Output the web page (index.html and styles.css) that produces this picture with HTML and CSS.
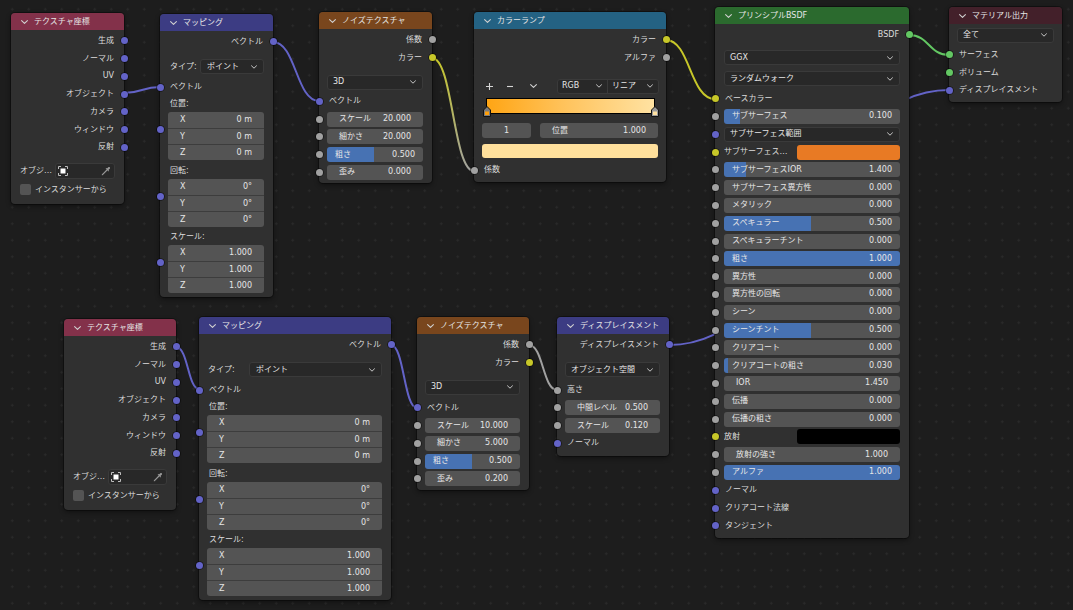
FILE: index.html
```html
<!DOCTYPE html>
<html lang="ja">
<head>
<meta charset="utf-8">
<title>Shader Editor</title>
<link rel="stylesheet" href="styles.css">
</head>
<body>
<div class="canvas">
  <svg class="links" width="1073" height="610" viewBox="0 0 1073 610">
    <defs>
      <linearGradient id="gYG" gradientUnits="userSpaceOnUse" x1="432" y1="58" x2="474" y2="171">
        <stop offset="0" stop-color="#c7c729"/>
        <stop offset="1" stop-color="#a1a1a1"/>
      </linearGradient>
    </defs>
    <g fill="none" stroke-width="2" stroke-linecap="round">
      <path d="M124 93 C142 93 142 87 160 87" stroke="#6363c7"/>
      <path d="M273 42 C296 42 296 101 319 101" stroke="#6363c7"/>
      <path d="M432 58 C453 58 453 171 474 171" stroke="url(#gYG)"/>
      <path d="M666 40 C690 40 690 99 715 99" stroke="#c7c729"/>
      <path d="M909 35 C929 35 929 55 949 55" stroke="#63c763"/>
      <path d="M669 345 C809 345 809 90 949 90" stroke="#6363c7"/>
      <path d="M176 347 C188 347 188 389 199 389" stroke="#6363c7"/>
      <path d="M391 345 C404 345 404 408 417 408" stroke="#6363c7"/>
      <path d="M529 345 C543 345 543 390 557 390" stroke="#a1a1a1"/>
    </g>
  </svg>

  <!-- Texture Coordinate 1 -->
  <div class="node n-tc1">
    <div class="hdr h-input"><svg class="chev" viewBox="0 0 7 4"><path d="M0.6 0.6 L3.5 3.4 L6.4 0.6"/></svg><span>テクスチャ座標</span></div>
    <div class="body pb4">
      <div class="row out">生成<i class="sk r vec"></i></div>
      <div class="row out">ノーマル<i class="sk r vec"></i></div>
      <div class="row out">UV<i class="sk r vec"></i></div>
      <div class="row out">オブジェクト<i class="sk r vec"></i></div>
      <div class="row out">カメラ<i class="sk r vec"></i></div>
      <div class="row out">ウィンドウ<i class="sk r vec"></i></div>
      <div class="row out">反射<i class="sk r vec"></i></div>
      <div class="row objrow mt55"><span class="objl">オブジ…</span>
        <div class="objf">
          <svg class="objico" viewBox="0 0 10 10"><path d="M0.5 3 V0.5 H3 M7 0.5 H9.5 V3 M9.5 7 V9.5 H7 M3 9.5 H0.5 V7" fill="none" stroke="#bdbdbd" stroke-width="1"/><rect x="2.5" y="2.5" width="5" height="5" fill="#ffffff"/></svg>
          <svg class="pick" viewBox="0 0 10 10"><path d="M0.8 9.2 L1.6 9.2 L6.4 4.4 L5.6 3.6 L0.8 8.4 Z" fill="#9a9a9a"/><path d="M4.6 2.6 L7.4 5.4 L8.1 4.7 L7.4 4 L9 2.4 A1.2 1.2 0 0 0 7.6 1 L6 2.6 L5.3 1.9 Z" fill="#9a9a9a"/></svg>
        </div>
      </div>
      <div class="row chkrow"><i class="cb"></i><span>インスタンサーから</span></div>
    </div>
  </div>

  <!-- Mapping 1 -->
  <div class="node n-map1">
    <div class="hdr h-vec"><svg class="chev" viewBox="0 0 7 4"><path d="M0.6 0.6 L3.5 3.4 L6.4 0.6"/></svg><span>マッピング</span></div>
    <div class="body pb4">
      <div class="row out">ベクトル<i class="sk r vec"></i></div>
      <div class="row w dr mt55 tp tp1"><span class="tpl">タイプ:</span><div class="dd"><span>ポイント</span><svg viewBox="0 0 7 4"><path d="M0.6 0.6 L3.5 3.4 L6.4 0.6"/></svg></div></div>
      <div class="row in mt1">ベクトル<i class="sk l vec"></i></div>
      <div class="vb"><i class="sk l vec"></i><div class="vl">位置:</div>
        <div class="vg"><div class="vf"><span>X</span><span>0 m</span></div><div class="vf"><span>Y</span><span>0 m</span></div><div class="vf"><span>Z</span><span>0 m</span></div></div></div>
      <div class="vb mt3"><i class="sk l vec"></i><div class="vl">回転:</div>
        <div class="vg"><div class="vf"><span>X</span><span>0°</span></div><div class="vf"><span>Y</span><span>0°</span></div><div class="vf"><span>Z</span><span>0°</span></div></div></div>
      <div class="vb mt2"><i class="sk l vec"></i><div class="vl">スケール:</div>
        <div class="vg"><div class="vf"><span>X</span><span>1.000</span></div><div class="vf"><span>Y</span><span>1.000</span></div><div class="vf"><span>Z</span><span>1.000</span></div></div></div>
    </div>
  </div>

  <!-- Noise 1 -->
  <div class="node n-noise1">
    <div class="hdr h-tex"><svg class="chev" viewBox="0 0 7 4"><path d="M0.6 0.6 L3.5 3.4 L6.4 0.6"/></svg><span>ノイズテクスチャ</span></div>
    <div class="body pb2">
      <div class="row out">係数<i class="sk r flt"></i></div>
      <div class="row out">カラー<i class="sk r col"></i></div>
      <div class="row w dr mt5"><div class="dd"><span>3D</span><svg viewBox="0 0 7 4"><path d="M0.6 0.6 L3.5 3.4 L6.4 0.6"/></svg></div></div>
      <div class="row in">ベクトル<i class="sk l vec"></i></div>
      <div class="row w"><i class="sk l flt"></i><div class="num"><span>スケール</span><span>20.000</span></div></div>
      <div class="row w"><i class="sk l flt"></i><div class="num"><span>細かさ</span><span>20.000</span></div></div>
      <div class="row w"><i class="sk l flt"></i><div class="num sl" style="--v:49%"><span>粗さ</span><span>0.500</span></div></div>
      <div class="row w"><i class="sk l flt"></i><div class="num"><span>歪み</span><span>0.000</span></div></div>
    </div>
  </div>

  <!-- Color Ramp -->
  <div class="node n-ramp">
    <div class="hdr h-conv"><svg class="chev" viewBox="0 0 7 4"><path d="M0.6 0.6 L3.5 3.4 L6.4 0.6"/></svg><span>カラーランプ</span></div>
    <div class="body">
      <div class="row out">カラー<i class="sk r col"></i></div>
      <div class="row out">アルファ<i class="sk r flt"></i></div>
      <div class="rtool">
        <svg class="tplus" viewBox="0 0 7 7"><path d="M3.5 0 V7 M0 3.5 H7" stroke="#d6d6d6" stroke-width="1.1"/></svg>
        <svg class="tminus" viewBox="0 0 6 7"><path d="M0 3.5 H6" stroke="#d6d6d6" stroke-width="1.1"/></svg>
        <svg class="tchev" viewBox="0 0 7 4"><path d="M0.6 0.6 L3.5 3.4 L6.4 0.6"/></svg>
        <div class="seg">
          <div class="segi s1"><span>RGB</span><svg viewBox="0 0 7 4"><path d="M0.6 0.6 L3.5 3.4 L6.4 0.6"/></svg></div>
          <div class="segi s2"><span>リニア</span><svg viewBox="0 0 7 4"><path d="M0.6 0.6 L3.5 3.4 L6.4 0.6"/></svg></div>
        </div>
      </div>
      <div class="rbar">
        <svg class="stop st-l" viewBox="0 0 8 11"><path d="M0.5 4 L4 0.5 L7.5 4 V10.5 H0.5 Z" fill="#7c7c7c" stroke="#111" stroke-width="1"/><rect x="2" y="5.5" width="4" height="3.5" fill="#ff9f0a"/></svg>
        <svg class="stop st-r" viewBox="0 0 8 11"><path d="M0.5 4 L4 0.5 L7.5 4 V10.5 H0.5 Z" fill="#9a9a9a" stroke="#111" stroke-width="1"/><rect x="2" y="5.5" width="4" height="3.5" fill="#ffe2a2"/></svg>
      </div>
      <div class="rf">
        <div class="num ctr"><span>1</span></div>
        <div class="num"><span>位置</span><span>1.000</span></div>
      </div>
      <div class="rsw"></div>
      <div class="row in mt325">係数<i class="sk l flt"></i></div>
    </div>
  </div>

  <!-- Principled BSDF -->
  <div class="node n-bsdf">
    <div class="hdr h-shd"><svg class="chev" viewBox="0 0 7 4"><path d="M0.6 0.6 L3.5 3.4 L6.4 0.6"/></svg><span>プリンシプルBSDF</span></div>
    <div class="body">
      <div class="row out">BSDF<i class="sk r shd"></i></div>
      <div class="row w dr mt35"><div class="dd"><span>GGX</span><svg viewBox="0 0 7 4"><path d="M0.6 0.6 L3.5 3.4 L6.4 0.6"/></svg></div></div>
      <div class="row w dr"><div class="dd"><span>ランダムウォーク</span><svg viewBox="0 0 7 4"><path d="M0.6 0.6 L3.5 3.4 L6.4 0.6"/></svg></div></div>
      <div class="row in mt05">ベースカラー<i class="sk l col"></i></div>
      <div class="row w"><i class="sk l flt"></i><div class="num sl" style="--v:9%"><span>サブサーフェス</span><span>0.100</span></div></div>
      <div class="row w"><i class="sk l vec"></i><div class="dd"><span>サブサーフェス範囲</span><svg viewBox="0 0 7 4"><path d="M0.6 0.6 L3.5 3.4 L6.4 0.6"/></svg></div></div>
      <div class="row w"><i class="sk l col"></i><span class="cl">サブサーフェス…</span><div class="sw sw-or"></div></div>
      <div class="row w"><i class="sk l flt"></i><div class="num sl" style="--v:12.5%"><span>サブサーフェスIOR</span><span>1.400</span></div></div>
      <div class="row w"><i class="sk l flt"></i><div class="num sl" style="--v:0%"><span>サブサーフェス異方性</span><span>0.000</span></div></div>
      <div class="row w"><i class="sk l flt"></i><div class="num sl" style="--v:0%"><span>メタリック</span><span>0.000</span></div></div>
      <div class="row w"><i class="sk l flt"></i><div class="num sl" style="--v:49.5%"><span>スペキュラー</span><span>0.500</span></div></div>
      <div class="row w"><i class="sk l flt"></i><div class="num sl" style="--v:0%"><span>スペキュラーチント</span><span>0.000</span></div></div>
      <div class="row w"><i class="sk l flt"></i><div class="num sl" style="--v:100%"><span>粗さ</span><span>1.000</span></div></div>
      <div class="row w"><i class="sk l flt"></i><div class="num sl" style="--v:0%"><span>異方性</span><span>0.000</span></div></div>
      <div class="row w"><i class="sk l flt"></i><div class="num sl" style="--v:0%"><span>異方性の回転</span><span>0.000</span></div></div>
      <div class="row w"><i class="sk l flt"></i><div class="num sl" style="--v:0%"><span>シーン</span><span>0.000</span></div></div>
      <div class="row w"><i class="sk l flt"></i><div class="num sl" style="--v:49.5%"><span>シーンチント</span><span>0.500</span></div></div>
      <div class="row w"><i class="sk l flt"></i><div class="num sl" style="--v:0%"><span>クリアコート</span><span>0.000</span></div></div>
      <div class="row w"><i class="sk l flt"></i><div class="num sl" style="--v:2%"><span>クリアコートの粗さ</span><span>0.030</span></div></div>
      <div class="row w"><i class="sk l flt"></i><div class="num"><span>IOR</span><span>1.450</span></div></div>
      <div class="row w"><i class="sk l flt"></i><div class="num sl" style="--v:0%"><span>伝播</span><span>0.000</span></div></div>
      <div class="row w"><i class="sk l flt"></i><div class="num sl" style="--v:0%"><span>伝播の粗さ</span><span>0.000</span></div></div>
      <div class="row w"><i class="sk l col"></i><span class="cl">放射</span><div class="sw sw-bk"></div></div>
      <div class="row w"><i class="sk l flt"></i><div class="num"><span>放射の強さ</span><span>1.000</span></div></div>
      <div class="row w"><i class="sk l flt"></i><div class="num sl" style="--v:100%"><span>アルファ</span><span>1.000</span></div></div>
      <div class="row in">ノーマル<i class="sk l vec"></i></div>
      <div class="row in">クリアコート法線<i class="sk l vec"></i></div>
      <div class="row in">タンジェント<i class="sk l vec"></i></div>
    </div>
  </div>

  <!-- Material Output -->
  <div class="node n-out">
    <div class="hdr h-out"><svg class="chev" viewBox="0 0 7 4"><path d="M0.6 0.6 L3.5 3.4 L6.4 0.6"/></svg><span>マテリアル出力</span></div>
    <div class="body">
      <div class="row w r18"><div class="dd"><span>全て</span><svg viewBox="0 0 7 4"><path d="M0.6 0.6 L3.5 3.4 L6.4 0.6"/></svg></div></div>
      <div class="row in mt2">サーフェス<i class="sk l shd"></i></div>
      <div class="row in">ボリューム<i class="sk l shd"></i></div>
      <div class="row in">ディスプレイスメント<i class="sk l vec"></i></div>
    </div>
  </div>

  <!-- Texture Coordinate 2 -->
  <div class="node n-tc2">
    <div class="hdr h-input"><svg class="chev" viewBox="0 0 7 4"><path d="M0.6 0.6 L3.5 3.4 L6.4 0.6"/></svg><span>テクスチャ座標</span></div>
    <div class="body pb4">
      <div class="row out">生成<i class="sk r vec"></i></div>
      <div class="row out">ノーマル<i class="sk r vec"></i></div>
      <div class="row out">UV<i class="sk r vec"></i></div>
      <div class="row out">オブジェクト<i class="sk r vec"></i></div>
      <div class="row out">カメラ<i class="sk r vec"></i></div>
      <div class="row out">ウィンドウ<i class="sk r vec"></i></div>
      <div class="row out">反射<i class="sk r vec"></i></div>
      <div class="row objrow mt55"><span class="objl">オブジ…</span>
        <div class="objf">
          <svg class="objico" viewBox="0 0 10 10"><path d="M0.5 3 V0.5 H3 M7 0.5 H9.5 V3 M9.5 7 V9.5 H7 M3 9.5 H0.5 V7" fill="none" stroke="#bdbdbd" stroke-width="1"/><rect x="2.5" y="2.5" width="5" height="5" fill="#ffffff"/></svg>
          <svg class="pick" viewBox="0 0 10 10"><path d="M0.8 9.2 L1.6 9.2 L6.4 4.4 L5.6 3.6 L0.8 8.4 Z" fill="#9a9a9a"/><path d="M4.6 2.6 L7.4 5.4 L8.1 4.7 L7.4 4 L9 2.4 A1.2 1.2 0 0 0 7.6 1 L6 2.6 L5.3 1.9 Z" fill="#9a9a9a"/></svg>
        </div>
      </div>
      <div class="row chkrow"><i class="cb"></i><span>インスタンサーから</span></div>
    </div>
  </div>

  <!-- Mapping 2 -->
  <div class="node n-map2">
    <div class="hdr h-vec"><svg class="chev" viewBox="0 0 7 4"><path d="M0.6 0.6 L3.5 3.4 L6.4 0.6"/></svg><span>マッピング</span></div>
    <div class="body pb4">
      <div class="row out">ベクトル<i class="sk r vec"></i></div>
      <div class="row w dr mt55 tp tp2"><span class="tpl">タイプ:</span><div class="dd"><span>ポイント</span><svg viewBox="0 0 7 4"><path d="M0.6 0.6 L3.5 3.4 L6.4 0.6"/></svg></div></div>
      <div class="row in mt1">ベクトル<i class="sk l vec"></i></div>
      <div class="vb"><i class="sk l vec"></i><div class="vl">位置:</div>
        <div class="vg"><div class="vf"><span>X</span><span>0 m</span></div><div class="vf"><span>Y</span><span>0 m</span></div><div class="vf"><span>Z</span><span>0 m</span></div></div></div>
      <div class="vb mt3"><i class="sk l vec"></i><div class="vl">回転:</div>
        <div class="vg"><div class="vf"><span>X</span><span>0°</span></div><div class="vf"><span>Y</span><span>0°</span></div><div class="vf"><span>Z</span><span>0°</span></div></div></div>
      <div class="vb mt2"><i class="sk l vec"></i><div class="vl">スケール:</div>
        <div class="vg"><div class="vf"><span>X</span><span>1.000</span></div><div class="vf"><span>Y</span><span>1.000</span></div><div class="vf"><span>Z</span><span>1.000</span></div></div></div>
    </div>
  </div>

  <!-- Noise 2 -->
  <div class="node n-noise2">
    <div class="hdr h-tex"><svg class="chev" viewBox="0 0 7 4"><path d="M0.6 0.6 L3.5 3.4 L6.4 0.6"/></svg><span>ノイズテクスチャ</span></div>
    <div class="body pb2">
      <div class="row out">係数<i class="sk r flt"></i></div>
      <div class="row out">カラー<i class="sk r col"></i></div>
      <div class="row w dr mt5"><div class="dd"><span>3D</span><svg viewBox="0 0 7 4"><path d="M0.6 0.6 L3.5 3.4 L6.4 0.6"/></svg></div></div>
      <div class="row in mt15">ベクトル<i class="sk l vec"></i></div>
      <div class="row w"><i class="sk l flt"></i><div class="num"><span>スケール</span><span>10.000</span></div></div>
      <div class="row w"><i class="sk l flt"></i><div class="num"><span>細かさ</span><span>5.000</span></div></div>
      <div class="row w"><i class="sk l flt"></i><div class="num sl" style="--v:49%"><span>粗さ</span><span>0.500</span></div></div>
      <div class="row w"><i class="sk l flt"></i><div class="num"><span>歪み</span><span>0.200</span></div></div>
    </div>
  </div>

  <!-- Displacement -->
  <div class="node n-disp">
    <div class="hdr h-vec"><svg class="chev" viewBox="0 0 7 4"><path d="M0.6 0.6 L3.5 3.4 L6.4 0.6"/></svg><span>ディスプレイスメント</span></div>
    <div class="body pb4">
      <div class="row out">ディスプレイスメント<i class="sk r vec"></i></div>
      <div class="row w dr mt55"><div class="dd"><span>オブジェクト空間</span><svg viewBox="0 0 7 4"><path d="M0.6 0.6 L3.5 3.4 L6.4 0.6"/></svg></div></div>
      <div class="row in mt1">高さ<i class="sk l flt"></i></div>
      <div class="row w"><i class="sk l flt"></i><div class="num"><span>中間レベル</span><span>0.500</span></div></div>
      <div class="row w"><i class="sk l flt"></i><div class="num"><span>スケール</span><span>0.120</span></div></div>
      <div class="row in">ノーマル<i class="sk l vec"></i></div>
    </div>
  </div>
</div>
</body>
</html>
```
FILE: styles.css
```css
* { box-sizing: border-box; }
html, body { margin: 0; padding: 0; }
body {
  width: 1073px;
  height: 610px;
  overflow: hidden;
  background: #1d1d1d;
  font-family: "DejaVu Sans", "Noto Sans CJK JP", sans-serif;
  font-size: 8px;
  line-height: 10px;
  color: #dcdcdc;
}
.canvas {
  position: relative;
  width: 1073px;
  height: 610px;
  background-color: #1d1d1d;
  background-image: radial-gradient(circle at center, #2a2a2a 0 1px, transparent 1.3px);
  background-size: 16.5px 16.5px;
  background-position: 4px 1px;
}
.links { position: absolute; left: 0; top: 0; }

/* nodes on the free canvas */
.node {
  position: absolute;
  background: #303030;
  border-radius: 4px;
  box-shadow: 0 0 0 1px rgba(0,0,0,0.35), 0 2px 5px rgba(0,0,0,0.45);
  display: flex;
  flex-direction: column;
}
.n-tc1 { left: 11px; top: 13px; width: 113px; }
.n-map1 { left: 160px; top: 14px; width: 113px; }
.n-noise1 { left: 319px; top: 12px; width: 113px; }
.n-ramp { left: 474px; top: 12px; width: 192px; }
.n-bsdf { left: 715px; top: 7px; width: 194px; }
.n-out { left: 949px; top: 7px; width: 113px; }
.n-tc2 { left: 64px; top: 319px; width: 112px; }
.n-map2 { left: 199px; top: 317px; width: 192px; }
.n-noise2 { left: 417px; top: 317px; width: 112px; }
.n-disp { left: 557px; top: 317px; width: 112px; }

.hdr {
  height: 17px;
  flex: none;
  display: flex;
  align-items: center;
  gap: 6px;
  padding-left: 10px;
  border-radius: 4px 4px 0 0;
  color: #e6e6e6;
  white-space: nowrap;
}
.hdr .chev { width: 7px; height: 4px; flex: none; }
.chev path, .dd svg path, .segi svg path, .tchev path {
  fill: none; stroke: #d0d0d0; stroke-width: 1.1; stroke-linecap: round; stroke-linejoin: round;
}
.h-input { background: #83314a; }
.h-vec { background: #3c3c83; }
.h-tex { background: #79461d; }
.h-conv { background: #246283; }
.h-shd { background: #2b6a2e; }
.h-out { background: #43202a; }

.body { display: flex; flex-direction: column; padding: 2px 0 3px; }
.pb2 { padding-bottom: 2px; }
.pb4 { padding-bottom: 4px; }

.row {
  position: relative;
  flex: none;
  height: 17.75px;
  display: flex;
  align-items: center;
  padding: 0 10px;
  white-space: nowrap;
}
.n-bsdf .row { height: 17.8px; }
.row.out { justify-content: flex-end; }
.row.w { padding: 0 9px 0 8px; }
.n-bsdf .row.w { padding: 0 9px; }
.n-ramp .row.w, .n-out .row.w { padding: 0 8px; }
.row.dr, .n-bsdf .row.dr { height: 21px; }
.row.r18 { height: 18px; }

.mt05 { margin-top: 0.5px; }
.mt1 { margin-top: 1px; }
.mt15 { margin-top: 1.5px; }
.mt2 { margin-top: 2px; }
.mt3 { margin-top: 3px; }
.mt325 { margin-top: 3.25px; }
.mt35 { margin-top: 3.5px; }
.mt5 { margin-top: 5px; }
.mt55 { margin-top: 5.5px; }

/* sockets */
.sk {
  position: absolute;
  top: 50%;
  width: 7px;
  height: 7px;
  margin-top: -3.5px;
  border-radius: 50%;
  box-shadow: 0 0 0 0.8px rgba(0,0,0,0.55);
}
.sk.r { right: -3.5px; }
.sk.l { left: -3.5px; }
.vec { background: #6363c7; }
.flt { background: #a1a1a1; }
.col { background: #c7c729; }
.shd { background: #63c763; }

/* number field / slider */
.num {
  flex: 1;
  height: 15px;
  border-radius: 3px;
  background: #545454;
  display: flex;
  align-items: center;
  justify-content: space-between;
  padding: 0 12px;
  color: #e6e6e6;
  overflow: hidden;
}
.num.sl {
  padding: 0 8px;
  background: linear-gradient(90deg, #4772b3 var(--v, 0%), #545454 var(--v, 0%));
}
.num.ctr { justify-content: center; flex: none; width: 49px; }

/* dropdown */
.dd {
  flex: 1;
  height: 15px;
  border-radius: 3px;
  background: #282828;
  border: 1px solid #3a3a3a;
  display: flex;
  align-items: center;
  justify-content: space-between;
  padding: 0 6px 0 5px;
  color: #e6e6e6;
  overflow: hidden;
}
.dd svg { width: 6px; height: 4px; flex: none; }

.tp .tpl { flex: none; padding-left: 2px; }
.tp1 .tpl { width: 32px; }
.tp2 .tpl { width: 42px; padding-left: 1px; }
.tp .dd { padding-left: 6px; }

/* vector blocks */
.vb { position: relative; padding: 0 9px 0 8px; flex: none; }
.vb > .sk { top: 29.5px; margin-top: 0; }
.vl { height: 16px; display: flex; align-items: center; padding-left: 2px; }
.vg { border-radius: 3px; overflow: hidden; }
.vf {
  height: 16px;
  background: #545454;
  display: flex;
  align-items: center;
  justify-content: space-between;
  padding: 0 12px;
  border-top: 1px solid #3d3d3d;
  color: #e6e6e6;
}
.vf:first-child { border-top: none; }

/* object field + checkbox */
.objrow { height: 18px; padding: 0 9px; }
.objl { width: 35px; flex: none; overflow: hidden; }
.objf {
  flex: 1;
  height: 16px;
  border-radius: 3px;
  background: #282828;
  border: 1px solid #3a3a3a;
  display: flex;
  align-items: center;
  justify-content: space-between;
  padding: 0 3px 0 2px;
}
.objico { width: 10px; height: 10px; }
.pick { width: 10px; height: 10px; }
.chkrow { height: 20px; padding: 0 9px; gap: 4px; }
.cb { width: 11px; height: 11px; border-radius: 2px; background: #545454; flex: none; }

/* color ramp */
.rtool {
  flex: none;
  height: 16px;
  margin-top: 11.5px;
  display: flex;
  align-items: center;
  padding: 0 7px 0 12px;
}
.tplus { width: 7px; height: 7px; }
.tminus { width: 6px; height: 7px; margin-left: 14px; }
.tchev { width: 7px; height: 4px; margin-left: 17px; }
.seg {
  margin-left: auto;
  width: 102px;
  height: 15px;
  display: flex;
  background: #282828;
  border: 1px solid #3a3a3a;
  border-radius: 3px;
  color: #e6e6e6;
}
.segi { display: flex; align-items: center; justify-content: space-between; padding: 0 5px 0 4px; }
.segi svg { width: 6px; height: 4px; }
.s1 { width: 50px; border-right: 1px solid #3a3a3a; }
.s2 { flex: 1; }
.rbar {
  position: relative;
  flex: none;
  height: 16px;
  margin: 3.5px 11px 0 12px;
  border: 1px solid #000;
  background: linear-gradient(90deg, #ffa514 0%, #ffc25a 45%, #ffe2a2 100%);
}
.stop { position: absolute; width: 8px; height: 11px; top: 7.5px; }
.st-l { left: -4.5px; }
.st-r { right: -4.5px; }
.rf { flex: none; display: flex; gap: 9px; padding: 0 8px; margin-top: 9.5px; }
.rsw { flex: none; height: 14px; margin: 6px 8px 0; border-radius: 3px; background: #ffe09c; }

/* colour swatches in BSDF */
.cl { flex: 1; overflow: hidden; }
.sw { flex: none; width: 103px; height: 15px; border-radius: 3px; }
.sw-or { background: #e87a24; }
.sw-bk { background: #000000; }
```
